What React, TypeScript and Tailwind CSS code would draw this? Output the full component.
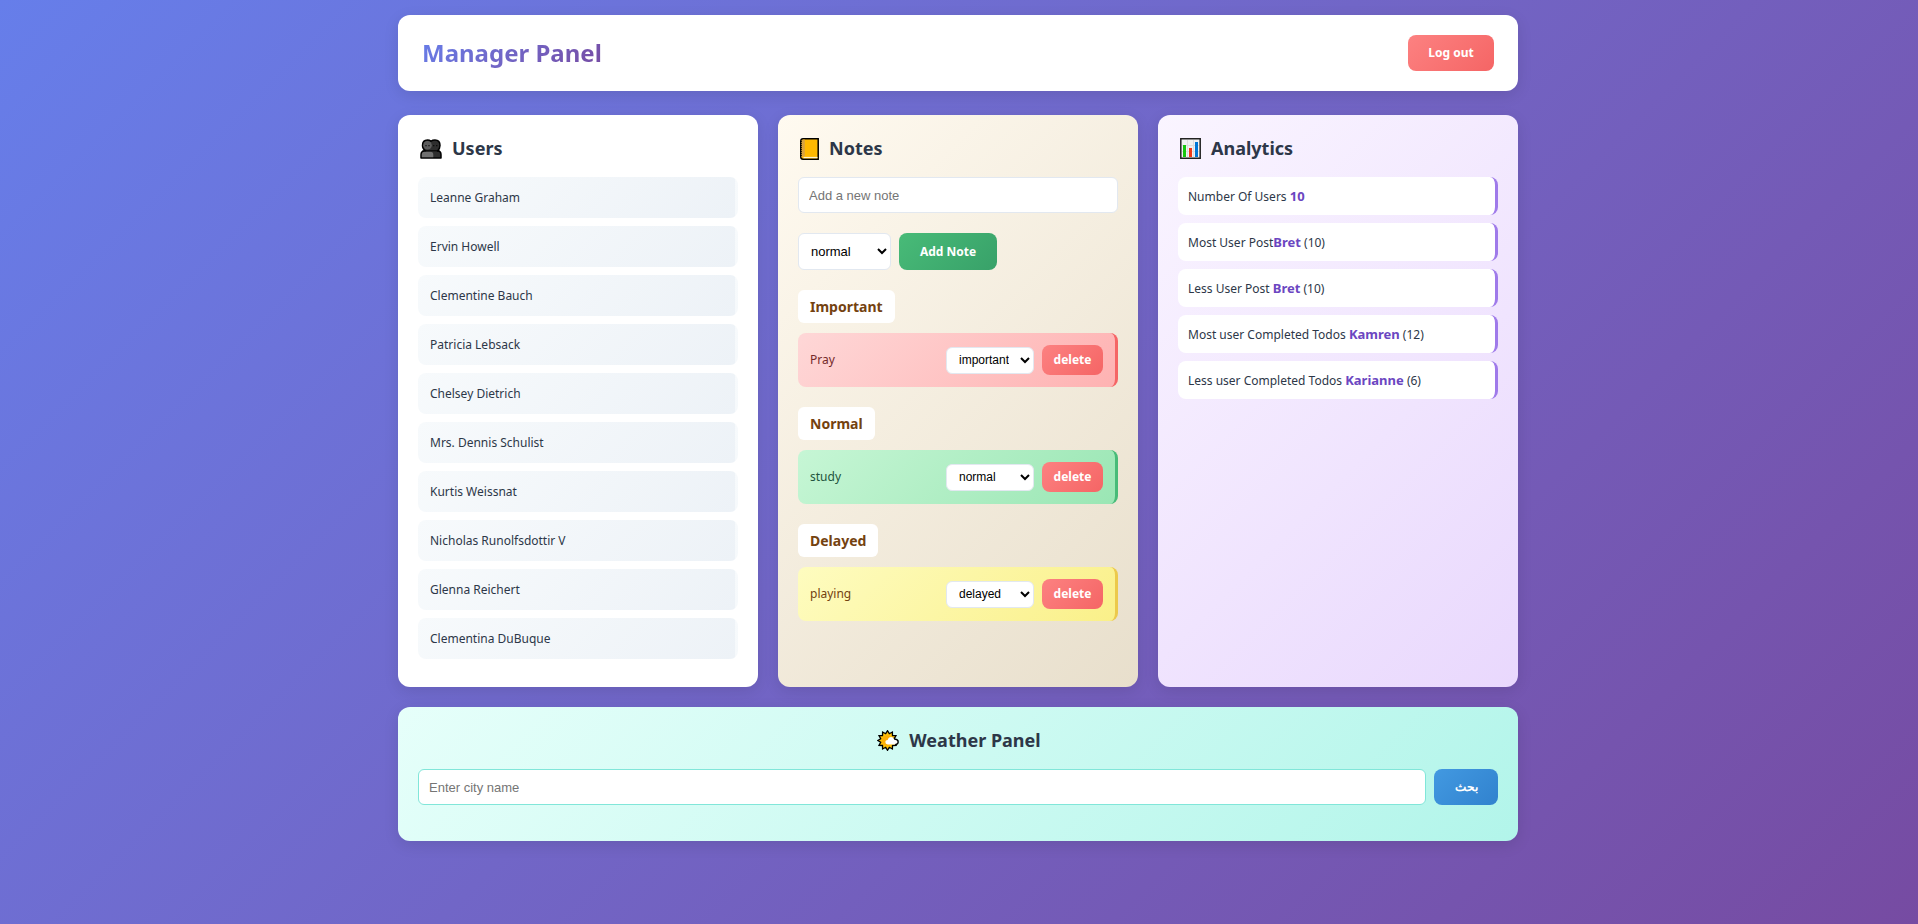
import type { ReactNode } from "react";

const users = [
  "Leanne Graham",
  "Ervin Howell",
  "Clementine Bauch",
  "Patricia Lebsack",
  "Chelsey Dietrich",
  "Mrs. Dennis Schulist",
  "Kurtis Weissnat",
  "Nicholas Runolfsdottir V",
  "Glenna Reichert",
  "Clementina DuBuque",
];

const noteGroups = [
  {
    title: "Important",
    value: "important",
    text: "Pray",
    style: "from-[#fed7d7] to-[#feb2b2] border-[#f56565] text-[#742a2a]",
  },
  {
    title: "Normal",
    value: "normal",
    text: "study",
    style: "from-[#c6f6d5] to-[#9ae6b4] border-[#48bb78] text-[#22543d]",
  },
  {
    title: "Delayed",
    value: "delayed",
    text: "playing",
    style: "from-[#fefcbf] to-[#faf089] border-[#ecc94b] text-[#744210]",
  },
];

const stats = [
  { label: "Number Of Users ", value: "10", count: "" },
  { label: "Most User Post", value: "Bret", count: " (10)" },
  { label: "Less User Post ", value: "Bret", count: " (10)" },
  { label: "Most user Completed Todos ", value: "Kamren", count: " (12)" },
  { label: "Less user Completed Todos ", value: "Karianne", count: " (6)" },
];

const card = "rounded-xl p-5 shadow-[0_4px_15px_rgba(0,0,0,0.1)]";
const control =
  "rounded-md border border-[#e2e8f0] bg-white font-['Liberation_Sans',Arial,sans-serif] text-black";
const redButton =
  "rounded-lg bg-linear-135 from-[#fc8181] to-[#f56565] font-bold text-white";

function UsersIcon() {
  return (
    <svg viewBox="0 0 22 20" className="h-5 w-[22px]" aria-hidden="true">
      <path
        d="M1 19v-3.200Q1 12 4.500 12H5.500Q2.500 9.800 2.500 6.500 2.500 1 7.500 1 9.500 1 11 2.300 12.500 1 15 1q5 0 5 5.500 0 3.300-2.500 5.500h.5q3 0 3 3.800V19Z"
        fill="#2e2e2e"
        stroke="#000"
        strokeWidth="1.500"
        strokeLinejoin="round"
      />
      <path d="M1.800 18.300v-2.500q0-3 2.700-3h6q2.800 0 2.800 3v2.500Z" fill="#707070" />
      <circle cx="7.500" cy="6.300" r="4.300" fill="#5c5c5c" />
      <path d="M6 6v1.300M9 6v1.300M13.800 6v1.300M16.800 6v1.300" stroke="#000" strokeWidth="1" />
      <path d="M2.500 11.800h17" stroke="#000" strokeWidth="1" />
    </svg>
  );
}

function NotebookIcon() {
  return (
    <svg viewBox="0 0 19 22" className="h-[22px] w-[19px]" aria-hidden="true">
      <path d="M3 .8h15.200v20.400H3q-2.200 0-2.200-2.200V3Q.8.800 3 .8Z" fill="#ffb900" stroke="#000" strokeWidth="1.500" />
      <path d="M3.300 1.500h1.500v17h-1.500q-1.200 0-1.800.8V3.500q0-2 1.800-2Z" fill="#d9a441" />
      <path d="M3.500 18.900h14v1.300h-14Z" fill="#fff4cf" />
      <path d="M1 3v16" stroke="#000" strokeWidth="1.500" strokeDasharray="1 1" />
    </svg>
  );
}

function ChartIcon() {
  return (
    <svg viewBox="0 0 21 21" className="h-[21px] w-[21px]" aria-hidden="true">
      <path d="M.8.800h19.400v19.400H.8Z" fill="#f2f2f2" stroke="#222" strokeWidth="1.500" />
      <path d="M7.500 2v17M13.500 2v17M2 7.500h17M2 13.500h17" stroke="#ddd" strokeWidth="1" />
      <path d="M3 7h3v12H3Z" fill="#16c60c" />
      <path d="M9 10h3v9H9Z" fill="#f03a17" />
      <path d="M15 4h3v15h-3Z" fill="#0078d7" />
    </svg>
  );
}

function WeatherIcon() {
  return (
    <svg viewBox="0 0 22 21" className="h-[21px] w-[22px]" aria-hidden="true">
      <path
        d="M20.300 10.500 17.300 12.300 19 15.400 15.500 15.500 15.400 19 12.300 17.300 10.500 20.300 8.700 17.300 5.600 19 5.500 15.500 2 15.400 3.700 12.300.7 10.500 3.700 8.700 2 5.600 5.500 5.500 5.600 2 8.700 3.700 10.500.7 12.300 3.700 15.400 2 15.500 5.500 19 5.600 17.300 8.700Z"
        fill="#ffc20a"
        stroke="#000"
        strokeWidth="1.300"
      />
      <circle cx="10.300" cy="10.500" r="5.300" fill="#fcaf08" />
      <path
        d="M10.800 14.400q-2.500-.2-2.500-2.300t2.400-2.200q.7-3 3.600-3 2.500 0 3.200 2.500 3.700.2 3.700 2.600t-3 2.400Z"
        fill="#fff"
      />
      <path d="M17 7.500l.8 1.700q3.400.3 3.400 2.800 0 2.300-3 2.600" fill="none" stroke="#000" strokeWidth="1.300" />
    </svg>
  );
}

function Heading({ icon, children }: { icon: ReactNode; children: ReactNode }) {
  return (
    <h2 className="mb-[15px] flex items-center gap-2.5 pl-0.5 text-lg/[27px] font-bold text-[#2d3748]">
      {icon}
      {children}
    </h2>
  );
}

function PriorityOptions() {
  return (
    <>
      <option value="important">important</option>
      <option value="normal">normal</option>
      <option value="delayed">delayed</option>
    </>
  );
}

export default function App() {
  return (
    <div className="min-h-screen bg-linear-135 from-[#667eea] to-[#764ba2] py-[15px] pr-0.5 font-['Noto_Sans','Open_Sans',sans-serif] text-[12px] text-[#2d3748]">
      <div className="mx-auto max-w-[1120px]">
        <header className="mb-6 flex items-center justify-between rounded-xl bg-white px-6 py-5 shadow-[0_4px_15px_rgba(0,0,0,0.1)]">
          <h1 className="bg-linear-135 from-[#667eea] to-[#764ba2] bg-clip-text text-2xl/9 font-bold text-transparent">
            Manager Panel
          </h1>
          <button type="button" className={`${redButton} h-9 w-[86px]`}>
            Log out
          </button>
        </header>

        <main>
          <div className="mb-5 grid grid-cols-1 gap-5 md:grid-cols-3">
            <section className={`${card} bg-white`}>
              <Heading icon={<UsersIcon />}>Users</Heading>
              <ul>
                {users.map((name) => (
                  <li
                    key={name}
                    className="mb-2 rounded-lg border-r-3 border-transparent bg-linear-135 from-[#f7fafc] to-[#edf2f7] px-3 leading-[41px]"
                  >
                    {name}
                  </li>
                ))}
              </ul>
            </section>

            <section className={`${card} bg-linear-135 from-[#fffaf0] to-[#e8dfcc]`}>
              <Heading icon={<NotebookIcon />}>Notes</Heading>
              <form onSubmit={(e) => e.preventDefault()}>
                <input
                  type="text"
                  aria-label="New note"
                  placeholder="Add a new note"
                  className={`${control} mb-5 block h-9 w-full px-2.5 text-[13px] placeholder:text-[#757575]`}
                />
                <div className="mb-5 flex gap-2">
                  <select aria-label="Priority" defaultValue="normal" className={`${control} h-[37px] w-[93px] px-2 text-[13px]`}>
                    <PriorityOptions />
                  </select>
                  <button
                    type="submit"
                    className="h-[37px] w-[98px] rounded-lg bg-linear-135 from-[#48bb78] to-[#38a169] font-bold text-white"
                  >
                    Add Note
                  </button>
                </div>
              </form>
              {noteGroups.map((group) => (
                <div key={group.value} className="mb-5">
                  <h3 className="mb-2.5 w-fit rounded-md bg-white px-3 text-sm/[33px] font-bold text-[#744210]">
                    {group.title}
                  </h3>
                  <div
                    className={`${group.style} flex h-[54px] items-center gap-2 rounded-lg border-r-3 bg-linear-135 px-3`}
                  >
                    <span className="flex-1">{group.text}</span>
                    <select
                      aria-label={`Priority of ${group.text}`}
                      defaultValue={group.value}
                      className={`${control} h-[27px] w-[88px] px-2 text-[12px]`}
                    >
                      <PriorityOptions />
                    </select>
                    <button type="button" className={`${redButton} h-[30px] w-[61px]`}>
                      delete
                    </button>
                  </div>
                </div>
              ))}
            </section>

            <section className={`${card} bg-linear-135 from-[#faf5ff] to-[#e9d8fd]`}>
              <Heading icon={<ChartIcon />}>Analytics</Heading>
              <ul>
                {stats.map((stat) => (
                  <li
                    key={stat.label}
                    className="mb-2 h-[38px] rounded-lg border-r-3 border-[#9f7aea] bg-white px-2.5 leading-[38px]"
                  >
                    {stat.label}
                    <strong className="text-[13px] font-bold text-[#6b46c1]">{stat.value}</strong>
                    {stat.count}
                  </li>
                ))}
              </ul>
            </section>
          </div>

          <section className={`${card} bg-linear-135 from-[#e6fffa] to-[#b2f5ea]`}>
            <div className="flex justify-center">
              <Heading icon={<WeatherIcon />}>Weather Panel</Heading>
            </div>
            <form className="mb-4 flex gap-2" onSubmit={(e) => e.preventDefault()}>
              <input
                type="text"
                aria-label="City"
                placeholder="Enter city name"
                className="h-9 min-w-0 flex-1 rounded-md border border-[#81e6d9] bg-white px-2.5 font-['Liberation_Sans',Arial,sans-serif] text-[13px] placeholder:text-[#757575]"
              />
              <button
                type="submit"
                lang="ar"
                className="h-9 w-16 rounded-lg bg-linear-135 from-[#4299e1] to-[#3182ce] font-bold text-white"
              >
                بحث
              </button>
            </form>
          </section>
        </main>
      </div>
    </div>
  );
}
